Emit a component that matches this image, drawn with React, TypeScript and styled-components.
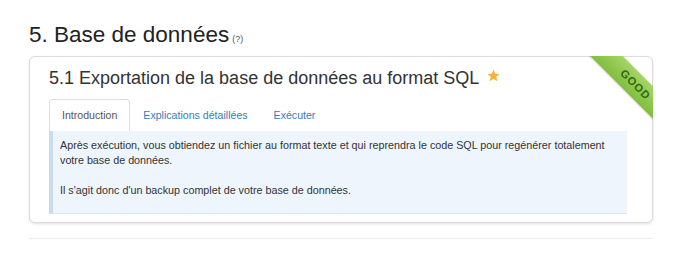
import React from "react";
import styled, { createGlobalStyle } from "styled-components";

const GlobalStyle = createGlobalStyle`
  html, body {
    margin: 0;
    padding: 0;
    background: #ffffff;
    font-family: "Liberation Sans", Arial, sans-serif;
    color: #333333;
  }
`;

const Page = styled.div`
  padding: 22px 31px 0 29px;
`;

const SectionTitle = styled.h2`
  margin: 0 0 8px;
  font-size: 22.5px;
  line-height: 26px;
  font-weight: normal;
  color: #222222;
`;

const Help = styled.small`
  font-size: 9px;
  line-height: 1;
  color: #555555;
  margin-left: 3px;
`;

const Card = styled.section`
  position: relative;
  border: 1px solid #dcdcdc;
  border-radius: 6px;
  box-shadow: 0 1px 3px rgba(0, 0, 0, 0.12);
  padding: 11px 25px 8px 19px;
  background: #ffffff;
`;

const CardTitle = styled.h3`
  margin: 0 0 10px;
  font-size: 18px;
  line-height: 21px;
  font-weight: normal;
  color: #333333;
  display: flex;
  align-items: center;
  gap: 8px;
`;

const Star = styled.svg`
  width: 13px;
  height: 13px;
  margin-top: -6px;
  fill: #f4b331;
`;

const Ribbon = styled.div`
  position: absolute;
  top: -1px;
  right: -1px;
  width: 64px;
  height: 64px;
  overflow: hidden;
  border-top-right-radius: 6px;
`;

const RibbonBand = styled.div`
  position: absolute;
  left: -8px;
  top: 13px;
  width: 100px;
  height: 23px;
  transform: rotate(45deg);
  background: linear-gradient(#a6d565, #80bd3e);
  box-shadow: 0 1px 2px rgba(0, 0, 0, 0.15);
  color: #2f6b10;
  font-size: 11px;
  font-weight: bold;
  letter-spacing: 1px;
  line-height: 23px;
  text-align: center;
  padding-left: 12px;
  box-sizing: border-box;
`;

const Tabs = styled.nav`
  display: flex;
`;

const Tab = styled.span<{ $active?: boolean }>`
  padding: 9px 12px;
  font-size: 10.6px;
  line-height: 13px;
  border: 1px solid ${({ $active }) => ($active ? "#dddddd" : "transparent")};
  border-bottom: none;
  border-radius: 4px 4px 0 0;
  color: ${({ $active }) => ($active ? "#555555" : "#3a7bb5")};
  background: #ffffff;
`;

const Panel = styled.div`
  background: #eef5fc;
  border-left: 4px solid #c8dcef;
  border-bottom: 1px solid #dbe6f1;
  padding: 7px 4px 15px 7px;
  font-size: 10.75px;
  line-height: 15px;
  color: #333333;

  p {
    margin: 0;
  }

  p + p {
    margin-top: 15px;
  }
`;

const Divider = styled.hr`
  margin: 15px 0 0;
  border: none;
  border-top: 1px solid #eeeeee;
`;

const App: React.FC = () => {
  return (
    <Page>
      <GlobalStyle />
      <SectionTitle>
        5. Base de données<Help>(?)</Help>
      </SectionTitle>
      <Card>
        <Ribbon>
          <RibbonBand>GOOD</RibbonBand>
        </Ribbon>
        <CardTitle>
          5.1 Exportation de la base de données au format SQL
          <Star viewBox="0 0 24 24">
            <polygon points="12,1 15.1,8.6 23.3,9.2 17,14.5 19,22.5 12,18.2 5,22.5 7,14.5 0.7,9.2 8.9,8.6" />
          </Star>
        </CardTitle>
        <Tabs>
          <Tab $active>Introduction</Tab>
          <Tab>Explications détaillées</Tab>
          <Tab>Exécuter</Tab>
        </Tabs>
        <Panel>
          <p>
            Après exécution, vous obtiendez un fichier au format texte et qui reprendra le code SQL pour
            regénérer totalement votre base de données.
          </p>
          <p>Il s'agit donc d'un backup complet de votre base de données.</p>
        </Panel>
      </Card>
      <Divider />
    </Page>
  );
};

export default App;
